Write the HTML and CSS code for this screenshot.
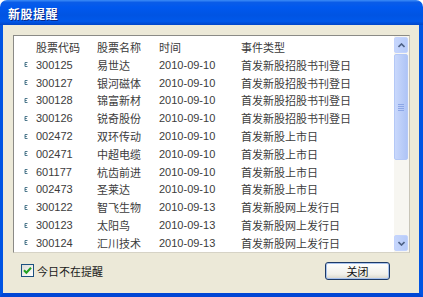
FILE: index.html
```html
<!DOCTYPE html>
<html lang="zh">
<head>
<meta charset="utf-8">
<title>新股提醒</title>
<link rel="stylesheet" href="styles.css">
</head>
<body>
<div class="window">
  <div class="titlebar"><span class="title">新股提醒</span></div>
  <div class="client">
    <div class="listbox">
      <div class="list">
        <div class="row head">
          <span></span><span>股票代码</span><span>股票名称</span><span>时间</span><span>事件类型</span>
        </div>
        <div class="row"><span class="ic"><svg width="4" height="5" viewBox="0 0 4 5"><path d="M3.5 0.5H1V4.5H3.5M1 2.5H2.8" fill="none" stroke="#3a6a80" stroke-width="0.9"/></svg></span><span>300125</span><span>易世达</span><span>2010-09-10</span><span>首发新股招股书刊登日</span></div>
        <div class="row"><span class="ic"><svg width="4" height="5" viewBox="0 0 4 5"><path d="M3.5 0.5H1V4.5H3.5M1 2.5H2.8" fill="none" stroke="#3a6a80" stroke-width="0.9"/></svg></span><span>300127</span><span>银河磁体</span><span>2010-09-10</span><span>首发新股招股书刊登日</span></div>
        <div class="row"><span class="ic"><svg width="4" height="5" viewBox="0 0 4 5"><path d="M3.5 0.5H1V4.5H3.5M1 2.5H2.8" fill="none" stroke="#3a6a80" stroke-width="0.9"/></svg></span><span>300128</span><span>锦富新材</span><span>2010-09-10</span><span>首发新股招股书刊登日</span></div>
        <div class="row"><span class="ic"><svg width="4" height="5" viewBox="0 0 4 5"><path d="M3.5 0.5H1V4.5H3.5M1 2.5H2.8" fill="none" stroke="#3a6a80" stroke-width="0.9"/></svg></span><span>300126</span><span>锐奇股份</span><span>2010-09-10</span><span>首发新股招股书刊登日</span></div>
        <div class="row"><span class="ic"><svg width="4" height="5" viewBox="0 0 4 5"><path d="M3.5 0.5H1V4.5H3.5M1 2.5H2.8" fill="none" stroke="#3a6a80" stroke-width="0.9"/></svg></span><span>002472</span><span>双环传动</span><span>2010-09-10</span><span>首发新股上市日</span></div>
        <div class="row"><span class="ic"><svg width="4" height="5" viewBox="0 0 4 5"><path d="M3.5 0.5H1V4.5H3.5M1 2.5H2.8" fill="none" stroke="#3a6a80" stroke-width="0.9"/></svg></span><span>002471</span><span>中超电缆</span><span>2010-09-10</span><span>首发新股上市日</span></div>
        <div class="row"><span class="ic"><svg width="4" height="5" viewBox="0 0 4 5"><path d="M3.5 0.5H1V4.5H3.5M1 2.5H2.8" fill="none" stroke="#3a6a80" stroke-width="0.9"/></svg></span><span>601177</span><span>杭齿前进</span><span>2010-09-10</span><span>首发新股上市日</span></div>
        <div class="row"><span class="ic"><svg width="4" height="5" viewBox="0 0 4 5"><path d="M3.5 0.5H1V4.5H3.5M1 2.5H2.8" fill="none" stroke="#3a6a80" stroke-width="0.9"/></svg></span><span>002473</span><span>圣莱达</span><span>2010-09-10</span><span>首发新股上市日</span></div>
        <div class="row"><span class="ic"><svg width="4" height="5" viewBox="0 0 4 5"><path d="M3.5 0.5H1V4.5H3.5M1 2.5H2.8" fill="none" stroke="#3a6a80" stroke-width="0.9"/></svg></span><span>300122</span><span>智飞生物</span><span>2010-09-13</span><span>首发新股网上发行日</span></div>
        <div class="row"><span class="ic"><svg width="4" height="5" viewBox="0 0 4 5"><path d="M3.5 0.5H1V4.5H3.5M1 2.5H2.8" fill="none" stroke="#3a6a80" stroke-width="0.9"/></svg></span><span>300123</span><span>太阳鸟</span><span>2010-09-13</span><span>首发新股网上发行日</span></div>
        <div class="row"><span class="ic"><svg width="4" height="5" viewBox="0 0 4 5"><path d="M3.5 0.5H1V4.5H3.5M1 2.5H2.8" fill="none" stroke="#3a6a80" stroke-width="0.9"/></svg></span><span>300124</span><span>汇川技术</span><span>2010-09-13</span><span>首发新股网上发行日</span></div>
      </div>
      <div class="scrollbar">
        <div class="sbtn"><svg width="7" height="5" viewBox="0 0 7 5"><path d="M0.5 4L3.5 1L6.5 4" fill="none" stroke="#4d6185" stroke-width="1.6"/></svg></div>
        <div class="thumb"><span class="grip"></span><span class="grip"></span><span class="grip"></span><span class="grip"></span></div>
        <div class="track"></div>
        <div class="sbtn"><svg width="7" height="5" viewBox="0 0 7 5"><path d="M0.5 1L3.5 4L6.5 1" fill="none" stroke="#4d6185" stroke-width="1.6"/></svg></div>
      </div>
    </div>
    <div class="footer">
      <label class="check">
        <span class="box"><svg width="9" height="9" viewBox="0 0 9 9"><path d="M1 4.3L3.4 6.8L8 1.8" fill="none" stroke="#21a121" stroke-width="2"/></svg></span>
        <span>今日不在提醒</span>
      </label>
      <button class="btn">关闭</button>
    </div>
  </div>
</div>
</body>
</html>
```

FILE: styles.css
```css
html, body {
  margin: 0;
  padding: 0;
  background: #ffffff;
}
.window {
  width: 423px;
  height: 297px;
  display: flex;
  flex-direction: column;
  font-family: "Liberation Sans", "Noto Sans CJK SC", sans-serif;
  font-size: 11px;
  color: #3c3c3c;
}
.titlebar {
  height: 25px;
  flex: none;
  border-radius: 7px 7px 0 0;
  background: linear-gradient(#3c8cf7 0%, #0a5ce8 10%, #0058ee 30%, #0054e3 60%, #0058ea 85%, #0045c8 100%);
  display: flex;
  align-items: center;
  padding-left: 8px;
  box-sizing: border-box;
}
.title {
  font-family: "Noto Sans CJK SC", sans-serif;
  font-weight: bold;
  font-size: 12px;
  color: #ffffff;
  text-shadow: 1px 1px 0 #0a2a8a;
  letter-spacing: 0.5px;
  margin-top: 1px;
}
.client {
  flex: 1;
  background: #ece9d8;
  border-left: 3px solid #0054e3;
  border-right: 4px solid #0054e3;
  border-bottom: 4px solid #0046d5;
  display: flex;
  flex-direction: column;
}
.listbox {
  margin: 10px 9px 0 10px;
  height: 218px;
  box-sizing: border-box;
  border: 1px solid #8a8a86;
  border-right-color: #c8c5b8;
  border-bottom-color: #d6d3c6;
  background: #ffffff;
  display: flex;
}
.list {
  flex: 1;
  padding-top: 2px;
}
.row {
  display: grid;
  grid-template-columns: 22px 61px 62px 82px 1fr;
  height: 17.8px;
  align-items: center;
  white-space: nowrap;
}
.row.head {
  height: 18px;
  color: #3a3a3a;
}
.ic {
  display: flex;
  align-items: center;
  padding-left: 10px;
}
.scrollbar {
  width: 15px;
  flex: none;
  display: flex;
  flex-direction: column;
  background: #f7f6f1;
  padding: 1px 0 1px 0;
  box-sizing: border-box;
}
.sbtn {
  height: 14px;
  margin: 0 1px 0 0;
  border: 1px solid #c3d3fd;
  border-radius: 2px;
  background: linear-gradient(90deg, #c6d6fc, #b7cbf9);
  display: flex;
  align-items: center;
  justify-content: center;
  flex: none;
}
.thumb {
  height: 104px;
  margin: 1px 1px 0 0;
  flex: none;
  border: 1px solid #b4c8f6;
  border-radius: 2px;
  background: linear-gradient(90deg, #c9d8fc, #b9ccf8 60%, #afc4f6);
  display: flex;
  flex-direction: column;
  align-items: center;
  justify-content: center;
  gap: 1px;
}
.grip {
  width: 6px;
  height: 1px;
  background: #8ca6e6;
}
.track {
  flex: 1;
}
.footer {
  display: flex;
  align-items: center;
  justify-content: space-between;
  padding: 9px 29px 0 18px;
  height: 17px;
}
.check {
  display: flex;
  align-items: center;
  gap: 3px;
  font-family: "Noto Sans CJK SC", sans-serif;
  font-size: 11px;
  color: #1a1a1a;
}
.box {
  width: 11px;
  height: 11px;
  border: 1px solid #1c5180;
  background: linear-gradient(135deg, #dcdcd5, #ffffff);
  display: flex;
  align-items: center;
  justify-content: center;
}
.btn {
  width: 65px;
  height: 18px;
  padding: 0;
  border: 1px solid #1d3a66;
  border-radius: 3px;
  background: linear-gradient(#ffffff, #f0f0ea 70%, #d8d5c9);
  box-shadow: inset 0 0 0 1px #a8c3ee;
  font-family: "Noto Sans CJK SC", sans-serif;
  font-size: 11px;
  color: #111111;
  line-height: 14px;
}
```
